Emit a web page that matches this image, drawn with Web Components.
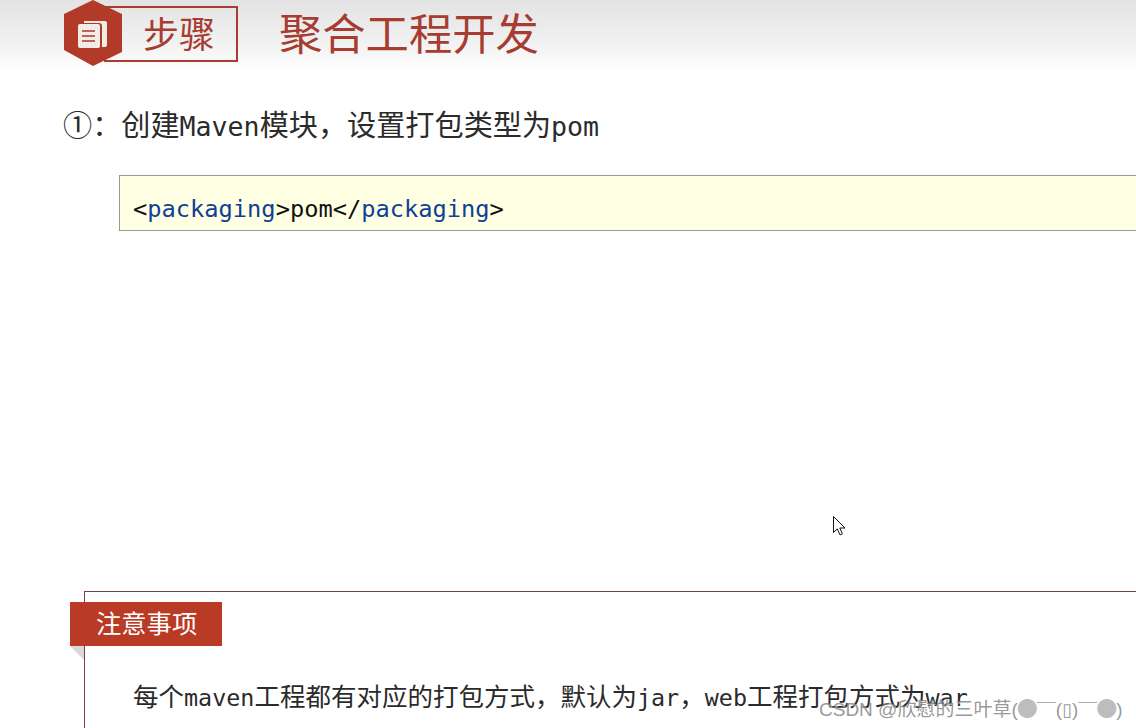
<!DOCTYPE html>
<html lang="zh"><head><meta charset="utf-8">
<style>
html,body{margin:0;padding:0;background:#fff;}
body{width:1136px;height:728px;overflow:hidden;font-family:"Noto Sans CJK SC","DejaVu Sans",sans-serif;}
</style></head><body>
<template id="t-header"><style>
:host{display:flex;align-items:flex-start;height:72px;padding-left:64px;box-sizing:border-box;background:linear-gradient(#e3e3e3,#f0f0f0 55%,#fff);}
.badge{position:relative;width:174px;height:66px;flex:none;display:flex;align-items:flex-start;justify-content:flex-end;padding-top:6px;box-sizing:border-box}
.box{width:134px;height:56px;box-sizing:border-box;border:2px solid #a63d30;color:#a63d30;font-size:36px;line-height:49px;padding-left:37px;white-space:nowrap}
svg{position:absolute;left:0;top:0}
.title{margin-left:41px;font-size:43.300px;line-height:63px;color:#a63d30;white-space:nowrap}
</style>
<div class="badge"><div class="box"><slot name="tag"></slot></div>
<svg width="58" height="66" viewBox="0 0 58 66"><polygon points="29,0 58,14 58,52 29,66 0,50 0,14" fill="#b23a29"/>
<path d="M20 21h21q2 0 2 2v22q0 2-2 2h-3V26q0-3-3-3H20z" fill="#f3ece6"/>
<rect x="14" y="24" width="22" height="24" rx="2" fill="#f3ece6"/>
<path d="M18 31h13M18 36h13M18 41h13" stroke="#a63d30" stroke-width="1.600" fill="none"/></svg></div>
<div class="title"><slot></slot></div></template>

<template id="t-step"><style>
:host{display:block;margin:28px 0 0 63px;height:51px;font-size:29.150px;line-height:46px;color:#2b2b2b;white-space:nowrap}
::slotted(i){font:normal 26.600px "DejaVu Sans Mono",monospace}
</style><slot></slot></template>

<template id="t-code"><style>
:host{display:block;margin:24px 0 0 119px;width:1100px;height:56px;box-sizing:border-box;border:1px solid #9a9a8c;background:#ffffe3;padding:17px 0 0 13px;font:23.700px/33px "DejaVu Sans Mono",monospace;color:#111;white-space:nowrap}
::slotted(b){font-weight:normal;color:#0f3f96}
</style><slot></slot></template>

<template id="t-note"><style>
:host{display:block;position:relative;margin:360px 0 0 84px;width:1100px;height:137px;box-sizing:border-box;border:solid #7a3f3b;border-width:1px 0 0 1px;}
.tag{position:absolute;left:-15px;top:10px;width:152px;height:44px;background:#b93a25;color:#fff;font-size:25.300px;line-height:40px;padding-left:26px;box-sizing:border-box;white-space:nowrap}
.fold{position:absolute;left:-15px;top:54px;width:0;height:0;border-top:14px solid #d9d9d9;border-left:14px solid transparent}
.body{padding:84px 0 0 48px;font-size:25.500px;line-height:38px;color:#2b2b2b;white-space:nowrap}
::slotted(i){font:normal 23.400px "DejaVu Sans Mono",monospace}
</style><div class="tag">注意事项</div><div class="fold"></div><div class="body"><slot></slot></div></template>

<template id="t-cursor"><style>
:host{position:absolute;left:833px;top:516px;width:14px;height:20px;display:block}
</style><svg width="14" height="20" viewBox="0 0 14 20"><path d="M.500.500v16l3.800-3.600 2.700 6 2.400-1-2.600-5.900h5.200z" fill="#fff" stroke="#111" stroke-width="1"/></svg></template>

<template id="t-mark"><style>
:host{position:absolute;left:819px;top:697px;display:block;font-size:19px;line-height:26px;color:rgba(125,125,125,.8);text-shadow:1px 1px 1px rgba(255,255,255,.7);white-space:nowrap;font-family:"Liberation Sans","Noto Sans CJK SC",sans-serif}
::slotted(u){text-decoration:none;font-family:"Noto Sans CJK SC",sans-serif;font-size:21px;line-height:20px;color:#bdbdbd;margin:0 -1px}
::slotted(em){font-style:normal;vertical-align:-3px;line-height:20px;font-family:"Noto Sans CJK SC",sans-serif}
::slotted(s){text-decoration:none;font-family:"DejaVu Sans",sans-serif;font-size:18px;line-height:20px}
</style><slot></slot></template>

<slide-header><span slot="tag">步骤</span>聚合工程开发</slide-header>
<step-line>①：创建<i>Maven</i>模块，设置打包类型为<i>pom</i></step-line>
<code-box>&lt;<b>packaging</b>&gt;pom&lt;/<b>packaging</b>&gt;</code-box>
<note-box>每个<i>maven</i>工程都有对应的打包方式，默认为<i>jar</i>，<i>web</i>工程打包方式为<i>war</i></note-box>
<mouse-cursor></mouse-cursor>
<water-mark>CSDN @欣慰的三叶草(<u>●</u><em>￣</em>(<s>▯</s>)<em>￣</em><u>●</u>)</water-mark>
<script>
const reg=(n,id)=>customElements.define(n,class extends HTMLElement{constructor(){super();this.attachShadow({mode:"open"}).appendChild(document.getElementById(id).content.cloneNode(true));}});
reg("slide-header","t-header");reg("step-line","t-step");reg("code-box","t-code");reg("note-box","t-note");reg("mouse-cursor","t-cursor");reg("water-mark","t-mark");
</script>
</body></html>
